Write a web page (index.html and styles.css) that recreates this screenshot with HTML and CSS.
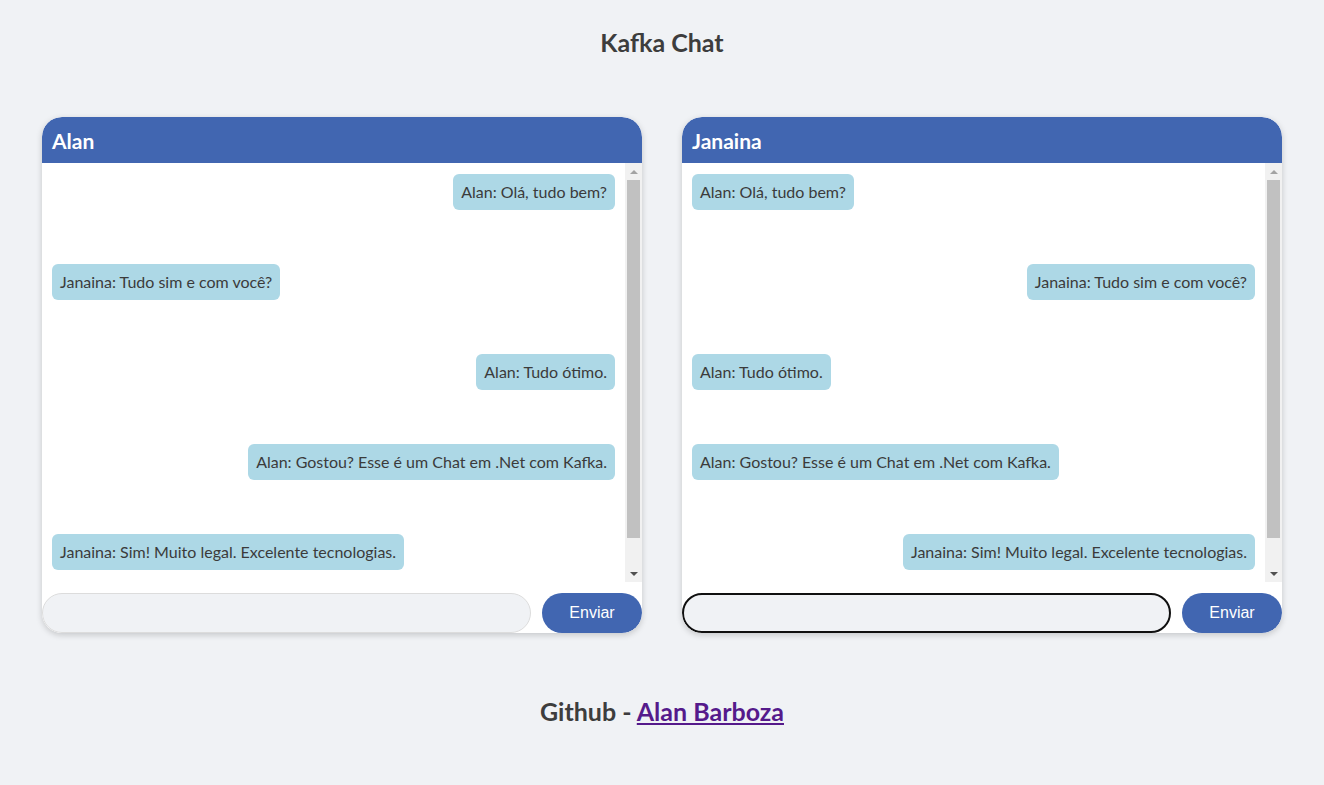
FILE: index.html
```html
<!DOCTYPE html>
<html lang="pt-BR">
<head>
<meta charset="utf-8">
<title>Kafka Chat</title>
<link rel="stylesheet" href="styles.css">
</head>
<body>
<h1 class="title">Kafka Chat</h1>
<main class="chats">
  <section class="chat">
    <header class="chat-head">Alan</header>
    <div class="body">
      <div class="messages">
        <div class="msg mine"><span class="bubble">Alan: Olá, tudo bem?</span></div>
        <div class="msg"><span class="bubble">Janaina: Tudo sim e com você?</span></div>
        <div class="msg mine"><span class="bubble">Alan: Tudo ótimo.</span></div>
        <div class="msg mine"><span class="bubble">Alan: Gostou? Esse é um Chat em .Net com Kafka.</span></div>
        <div class="msg"><span class="bubble">Janaina: Sim! Muito legal. Excelente tecnologias.</span></div>
      </div>
      <div class="sbar">
        <span class="sbtn"><svg width="8" height="4" viewBox="0 0 8 4"><path d="M0 4L4 0L8 4Z" fill="#a3a3a3"/></svg></span>
        <span class="strack"><span class="sthumb"></span></span>
        <span class="sbtn"><svg width="8" height="4" viewBox="0 0 8 4"><path d="M0 0L8 0L4 4Z" fill="#505050"/></svg></span>
      </div>
    </div>
    <form class="composer">
      <input class="field" type="text">
      <button class="send" type="button">Enviar</button>
    </form>
  </section>
  <section class="chat">
    <header class="chat-head">Janaina</header>
    <div class="body">
      <div class="messages">
        <div class="msg"><span class="bubble">Alan: Olá, tudo bem?</span></div>
        <div class="msg mine"><span class="bubble">Janaina: Tudo sim e com você?</span></div>
        <div class="msg"><span class="bubble">Alan: Tudo ótimo.</span></div>
        <div class="msg"><span class="bubble">Alan: Gostou? Esse é um Chat em .Net com Kafka.</span></div>
        <div class="msg mine"><span class="bubble">Janaina: Sim! Muito legal. Excelente tecnologias.</span></div>
      </div>
      <div class="sbar">
        <span class="sbtn"><svg width="8" height="4" viewBox="0 0 8 4"><path d="M0 4L4 0L8 4Z" fill="#a3a3a3"/></svg></span>
        <span class="strack"><span class="sthumb"></span></span>
        <span class="sbtn"><svg width="8" height="4" viewBox="0 0 8 4"><path d="M0 0L8 0L4 4Z" fill="#505050"/></svg></span>
      </div>
    </div>
    <form class="composer">
      <input class="field focused" type="text" autofocus>
      <button class="send" type="button">Enviar</button>
    </form>
  </section>
</main>
<footer class="footer">Github - <a class="gh" href="#">Alan Barboza</a></footer>
</body>
</html>
```
FILE: styles.css
```css
html, body {
  margin: 0;
  padding: 0;
}
body {
  background: #f0f2f5;
  font-family: Lato, "Noto Sans", sans-serif;
  color: #3a3a3a;
}
.title {
  margin: 0;
  padding-top: 26px;
  height: 117px;
  box-sizing: border-box;
  text-align: center;
  font-size: 25px;
  line-height: 32px;
  font-weight: 700;
  color: #3d3d3d;
}
.chats {
  display: flex;
  justify-content: center;
  gap: 40px;
}
.chat {
  width: 600px;
  height: 516px;
  display: flex;
  flex-direction: column;
  background: #fff;
  border-radius: 20px;
  box-shadow: 0 2px 6px rgba(0, 0, 0, 0.18);
  overflow: hidden;
}
.chat-head {
  height: 46px;
  flex: none;
  box-sizing: border-box;
  padding: 0 10px;
  display: flex;
  align-items: center;
  background: #4166b1;
  color: #fff;
  font-weight: 700;
  font-size: 21px;
  border-radius: 20px 20px 0 0;
}
.body {
  height: 419px;
  flex: none;
  display: flex;
}
.messages {
  flex: 1;
  overflow: hidden;
  box-sizing: border-box;
  padding: 11px 10px 0;
}
.sbar {
  width: 17px;
  flex: none;
  display: flex;
  flex-direction: column;
  background: #f1f1f1;
}
.sbtn {
  height: 17px;
  flex: none;
  display: flex;
  align-items: center;
  justify-content: center;
}
.strack {
  flex: 1;
  padding: 0 2px;
}
.sthumb {
  display: block;
  height: 358px;
  background: #c1c1c1;
}
.msg {
  display: flex;
  margin-bottom: 54px;
}
.msg.mine {
  justify-content: flex-end;
}
.bubble {
  display: inline-block;
  background: #add8e6;
  color: #3b3b3b;
  border-radius: 6px;
  padding: 0 8px;
  height: 36px;
  line-height: 36px;
  font-size: 16px;
}
.composer {
  margin: 11px 0 0;
  display: flex;
  gap: 11px;
  height: 40px;
}
.field {
  flex: 1;
  height: 40px;
  box-sizing: border-box;
  border: 1px solid #dcdcdc;
  border-radius: 20px;
  background: #f0f2f5;
  padding: 0 10px;
  font-size: 15px;
  outline: none;
}
.field.focused, .field:focus {
  border: 2px solid #101010;
}
.send {
  width: 100px;
  height: 40px;
  border: none;
  border-radius: 20px;
  background: #4166b1;
  color: #fff;
  font-family: "Liberation Sans", Arial, sans-serif;
  font-size: 16px;
}
.footer {
  text-align: center;
  margin-top: 62px;
  font-size: 25px;
  line-height: 32px;
  font-weight: 700;
  color: #3d3d3d;
}
.gh {
  color: #551a8b;
}
```
